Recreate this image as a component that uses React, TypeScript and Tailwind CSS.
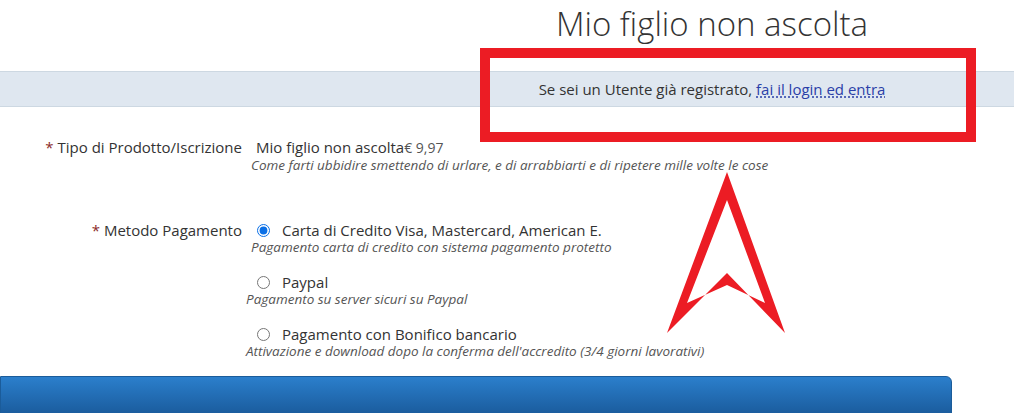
import React from "react";

const font = { fontFamily: '"Open Sans", "Liberation Sans", sans-serif' };

function Label({ text }: { text: string }) {
  return (
    <div className="w-[242px] shrink-0 text-right text-[15px] leading-[20px] text-[#333]">
      <span className="text-[#8b2a2a]">*</span> {text}
    </div>
  );
}

function Option({
  checked,
  title,
  desc,
  descPad,
}: {
  checked?: boolean;
  title: string;
  desc: string;
  descPad: string;
}) {
  return (
    <div>
      <div className="flex items-center pl-[15px]">
        <input
          type="radio"
          name="pay"
          defaultChecked={checked}
          className="m-0 h-[13px] w-[13px] accent-[#0a6fe6]"
        />
        <span className="ml-[12px] text-[15px] leading-[20px] text-[#333]">{title}</span>
      </div>
      <div className={`text-[13.5px] italic leading-[14px] text-[#555] ${descPad}`}>{desc}</div>
    </div>
  );
}

export default function App() {
  return (
    <div className="relative h-[413px] w-[1014px] overflow-hidden bg-white" style={font}>
      <div className="flex">
        <div className="w-[410px] shrink-0" />
        <h1 className="flex-1 pt-[3px] text-center text-[33px] font-light leading-[41px] text-[#333]">
          Mio figlio non ascolta
        </h1>
      </div>

      <div className="mt-[27px] flex h-[36px] items-center border-y border-[#cdd8e2] bg-[#dfe7f0]">
        <div className="w-[410px] shrink-0" />
        <div className="flex-1 text-center text-[15px] text-[#333]">
          Se sei un Utente già registrato,{" "}
          <a href="#" className="text-[#2a3fa8] underline decoration-dotted underline-offset-2">
            fai il login ed entra
          </a>
        </div>
      </div>

      <div className="mt-[30px] flex">
        <Label text="Tipo di Prodotto/Iscrizione" />
        <div className="pl-[14px]">
          <div className="text-[15px] leading-[20px] text-[#333]">
            Mio figlio non ascolta<span className="text-[14px] text-[#555]">€ 9,97</span>
          </div>
          <div className="-ml-[5px] text-[13.5px] italic leading-[14px] text-[#555]">
            Come farti ubbidire smettendo di urlare, e di arrabbiarti e di ripetere mille volte le cose
          </div>
        </div>
      </div>

      <div className="mt-[48px] flex">
        <Label text="Metodo Pagamento" />
        <div className="flex flex-col gap-[18px]">
          <Option
            checked
            title="Carta di Credito Visa, Mastercard, American E."
            desc="Pagamento carta di credito con sistema pagamento protetto"
            descPad="pl-[9px]"
          />
          <Option
            title="Paypal"
            desc="Pagamento su server sicuri su Paypal"
            descPad="pl-[4px]"
          />
          <Option
            title="Pagamento con Bonifico bancario"
            desc="Attivazione e download dopo la conferma dell'accredito (3/4 giorni lavorativi)"
            descPad="pl-[4px]"
          />
        </div>
      </div>

      <div className="mt-[18px] h-[40px] w-[952px] rounded-tr-[6px] border border-[#1b5c9a] bg-gradient-to-b from-[#2b7fcc] to-[#1a5b9c]" />

      {/* annotation overlays */}
      <div className="absolute left-[480px] top-[48px] h-[94px] w-[496px] border-[10px] border-[#ec1c24]" />
      <svg className="absolute left-0 top-0" width="1014" height="413" viewBox="0 0 1014 413">
        <path
          fill="#ec1c24"
          fillRule="evenodd"
          d="M727 172 L667 333 L727 273 L785 333 Z M727 200 L687 303 L727 285 L765 303 Z"
        />
      </svg>
    </div>
  );
}
